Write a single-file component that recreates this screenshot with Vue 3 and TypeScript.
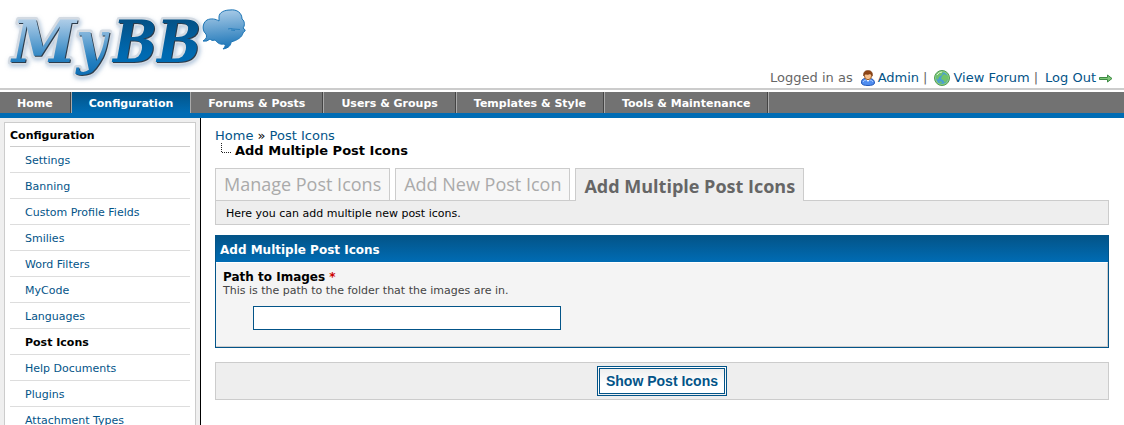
<script setup lang="ts">
import { ref } from 'vue'

interface Tab {
  label: string
  active?: boolean
}

const navItems: Tab[] = [
  { label: 'Home' },
  { label: 'Configuration', active: true },
  { label: 'Forums & Posts' },
  { label: 'Users & Groups' },
  { label: 'Templates & Style' },
  { label: 'Tools & Maintenance' },
]

const menuItems: Tab[] = [
  { label: 'Settings' },
  { label: 'Banning' },
  { label: 'Custom Profile Fields' },
  { label: 'Smilies' },
  { label: 'Word Filters' },
  { label: 'MyCode' },
  { label: 'Languages' },
  { label: 'Post Icons', active: true },
  { label: 'Help Documents' },
  { label: 'Plugins' },
  { label: 'Attachment Types' },
]

const tabs: Tab[] = [
  { label: 'Manage Post Icons' },
  { label: 'Add New Post Icon' },
  { label: 'Add Multiple Post Icons', active: true },
]

const path = ref('')
</script>

<template>
  <div class="page">
    <header class="header">
      <a href="#" class="logo" aria-label="MyBB">
        <svg width="250" height="84" viewBox="0 0 250 84">
          <defs>
            <linearGradient id="light" gradientUnits="userSpaceOnUse" x1="0" y1="18" x2="0" y2="74">
              <stop offset="0" stop-color="#b4d0e9" />
              <stop offset="0.75" stop-color="#2680c0" />
              <stop offset="1" stop-color="#0f70b6" />
            </linearGradient>
            <linearGradient id="dark" gradientUnits="userSpaceOnUse" x1="0" y1="18" x2="0" y2="62">
              <stop offset="0" stop-color="#045084" />
              <stop offset="0.8" stop-color="#0069b0" />
              <stop offset="1" stop-color="#006cb4" />
            </linearGradient>
            <linearGradient id="bubble" x1="0.5" y1="0" x2="0.6" y2="1">
              <stop offset="0" stop-color="#a9cbe7" />
              <stop offset="1" stop-color="#1672b6" />
            </linearGradient>
            <filter id="shade" x="-10%" y="-10%" width="120%" height="130%">
              <feDropShadow dx="1" dy="2" stdDeviation="2" flood-color="#7d9fc4" flood-opacity="0.6" />
            </filter>
          </defs>
          <g class="halo" filter="url(#shade)">
            <text x="12" y="62">M<tspan class="narrow">y</tspan></text>
            <text x="113" y="62" class="narrow">BB</text>
          </g>
          <g class="edge">
            <text x="13" y="63">M<tspan class="narrow">y</tspan></text>
            <text x="114" y="63" class="narrow">BB</text>
          </g>
          <g class="face">
            <text x="12" y="62" fill="url(#light)">M<tspan class="narrow">y</tspan></text>
            <text x="113" y="62" class="narrow" fill="url(#dark)">BB</text>
          </g>
          <path
            d="M219 17C219 12 225 10 230 10C237 9 242 13 242 19C245 21 245 26 243 28Q246 30 245 31Q243 32 243 33C242 37 238 40 231 42C231 45 229 48 223 49Q227 45 224 44C219 45 217 42 215 40C212 41 211 40 210 39Q207 42 203 41Q208 38 206 34C202 31 202 23 207 20C211 18 216 19 219 21Z"
            fill="url(#bubble)" stroke="#1b74b5" stroke-width="1"
          />
          <path d="M228 29Q231 28 233 29L240 29.500M231 30L235 30.500" fill="none" stroke="#2a7fbd" />
        </svg>
      </a>
      <div class="welcome">
        <span class="muted">Logged in as</span>
        <a href="#" class="user">
          <svg width="16" height="16" viewBox="0 0 16 16">
            <path d="M1.500 13Q1 9 5 8.500H10Q14.500 9 14.500 13Q14 15.500 8 15.500T1.500 13Z" fill="#4f8df0" stroke="#2559b8" />
            <path d="M3 12Q4 10 6 10M10 10Q12 10 13 12" fill="none" stroke="#a9cbff" />
            <path d="M5.500 8.500L8 12L10.500 8.500Z" fill="#fff" />
            <ellipse cx="8" cy="5.700" rx="3.600" ry="4" fill="#f7bf8d" stroke="#9a5a24" />
            <path d="M3.500 6Q3 .5 8 .5T12.500 6Q11 5 10.500 3.500Q8 5 5 4Q4.500 5 3.500 6Z" fill="#8f4516" stroke="#6e300a" stroke-width=".5" />
          </svg>Admin</a>
        <span class="muted bar">|</span>
        <a href="#" class="forum">
          <svg width="16" height="16" viewBox="0 0 16 16">
            <circle cx="8" cy="8" r="7.500" fill="#8ed17a" stroke="#4f9a5b" />
            <circle cx="8" cy="8" r="6" fill="#4b9fd0" />
            <path d="M3 4Q6 1 9 2L8 5L5 7L4 10L2 8ZM10 4L14 6V9L11 13L9 10L7 9L8 6ZM5 11L8 12L7 14Z" fill="#70c36b" />
            <path d="M3 5Q5 2 8 2" fill="none" stroke="#d9f4d4" />
          </svg>View Forum</a>
        <span class="muted bar">|</span>
        <a href="#" class="logout">Log Out<svg width="16" height="16" viewBox="0 0 16 16">
            <path d="M1.500 7.500V9.500H9.500V12L14 8.500L9.500 5V7.500Z" fill="#7cc576" stroke="#3d8a43" />
          </svg></a>
      </div>
    </header>

    <nav class="nav">
      <a v-for="item in navItems" :key="item.label" href="#" :class="{ active: item.active }">{{ item.label }}</a>
    </nav>

    <div class="body">
      <aside class="sidebar">
        <div class="menu">
          <h2>Configuration</h2>
          <ul>
            <li v-for="item in menuItems" :key="item.label">
              <a href="#" :class="{ active: item.active }">{{ item.label }}</a>
            </li>
          </ul>
        </div>
      </aside>

      <main class="content">
        <div class="breadcrumb">
          <div><a href="#">Home</a> » <a href="#">Post Icons</a></div>
          <div class="current">
            <svg width="10" height="10" viewBox="0 0 10 10">
              <path d="M.5 0V9.500H10" fill="none" stroke="#222" stroke-dasharray="1 1" />
            </svg>
            <strong>Add Multiple Post Icons</strong>
          </div>
        </div>

        <div class="tabs">
          <a v-for="tab in tabs" :key="tab.label" href="#" :class="{ active: tab.active }">{{ tab.label }}</a>
        </div>
        <p class="description">Here you can add multiple new post icons.</p>

        <form @submit.prevent>
          <section class="panel">
            <h1>Add Multiple Post Icons</h1>
            <div class="field">
              <label for="path">Path to Images <em>*</em></label>
              <p>This is the path to the folder that the images are in.</p>
              <input id="path" v-model="path" type="text">
            </div>
          </section>
          <div class="actions">
            <button type="submit">Show Post Icons</button>
          </div>
        </form>
      </main>
    </div>
  </div>
</template>

<style>
body {
  background: #fff;
  overflow: hidden;
}
</style>

<style scoped>
.page {
  height: 100vh;
  display: flex;
  flex-direction: column;
  overflow: hidden;
  font-family: Verdana, "DejaVu Sans", sans-serif;
  font-size: 11px;
  color: #000;
}
a {
  color: #035488;
  text-decoration: none;
}
svg {
  display: block;
  flex: none;
}
.header {
  display: flex;
  justify-content: space-between;
  align-items: flex-end;
  height: 88px;
  flex: none;
  border-bottom: 2px solid #ccc;
  margin-bottom: 2px;
}
.logo {
  align-self: flex-start;
}
.logo text {
  font: italic bold 58px "DejaVu Serif", serif;
}
.logo .narrow {
  font-family: "DejaVu Serif Condensed", "DejaVu Serif", serif;
}
.halo {
  fill: #d3dae2;
  stroke: #d3dae2;
  stroke-width: 5px;
  stroke-linejoin: round;
}
.edge {
  fill: #2c3c4c;
}
.welcome {
  display: flex;
  align-items: center;
  font-size: 13px;
  line-height: 16px;
  padding: 0 10px 2px 0;
}
.welcome a {
  display: flex;
  align-items: center;
}
.muted {
  color: #666;
}
.user {
  gap: 2px;
  margin-left: 7px;
}
.forum {
  gap: 3px;
  margin-left: 7px;
}
.logout {
  gap: 2px;
  margin-left: 7px;
}
.bar {
  margin-left: 4px;
}
.nav {
  display: flex;
  flex: none;
  background: #727272;
  border-bottom: 5px solid #006cb4;
}
.nav a {
  color: #fff;
  font-weight: bold;
  line-height: 19px;
  padding: 2px 17px 0;
  border-right: 1px solid #444;
  box-shadow: 1px 0 #aaa;
  margin-right: 1px;
}
.nav .active {
  background: linear-gradient(#035488, #006cb4);
  border-right-width: 0;
}
.body {
  display: flex;
  flex: 1;
  min-height: 0;
}
.sidebar {
  box-sizing: border-box;
  flex: none;
  width: 201px;
  padding: 4px;
  background: #efefef;
  border-right: 1px solid #000;
}
.menu {
  background: #fff;
  border: 1px solid #ccc;
  padding: 0 5px;
}
h2 {
  margin: 0;
  padding-top: 2px;
  font-size: 11px;
  line-height: 21px;
  border-bottom: 1px solid #ccc;
}
ul {
  list-style: none;
  margin: 0;
  padding: 0;
}
li {
  padding: 2px 0 0 15px;
  line-height: 23px;
  border-bottom: 1px solid #ddd;
}
.menu .active {
  color: #000;
  font-weight: bold;
}
.content {
  flex: 1;
  min-width: 0;
  padding: 10px 15px 0 14px;
}
.breadcrumb {
  font-size: 13px;
  line-height: 15px;
}
.current {
  display: flex;
  gap: 4px;
  padding-left: 6px;
}
.tabs {
  display: flex;
  align-items: flex-start;
  gap: 5px;
  margin-top: 10px;
  font: 18px "Open Sans", sans-serif;
}
.tabs a {
  box-sizing: border-box;
  height: 32px;
  line-height: 30px;
  padding: 0 8px;
  color: #aaa;
  background: #f7f7f7;
  border: 1px solid #ccc;
  border-bottom: 0;
}
.tabs .active {
  height: 33px;
  line-height: 35px;
  margin-bottom: -1px;
  position: relative;
  color: #666;
  font-weight: bold;
  background: #eee;
}
.description {
  margin: 0 0 10px;
  padding: 2px 10px 0;
  line-height: 21px;
  background: #eee;
  border: 1px solid #ccc;
}
.panel {
  border: 1px solid #035488;
  background: #f4f4f4;
}
h1 {
  margin: 0;
  padding: 2px 4px 0;
  font-size: 12px;
  line-height: 24px;
  color: #fff;
  background: linear-gradient(#035488, #006cb4);
}
.field {
  padding: 8px 7px 16px;
  border: 1px solid #ccc;
  border-top-color: #fff;
  border-left: 0;
}
.field label {
  display: block;
  font-size: 12px;
  font-weight: bold;
  line-height: 13px;
}
.field em {
  color: #c00;
  font-style: normal;
}
.field p {
  margin: 0;
  line-height: 14px;
  color: #444;
}
.field input {
  display: block;
  box-sizing: border-box;
  width: 308px;
  max-width: 90%;
  height: 24px;
  margin: 8px 0 0 30px;
  padding: 3px;
  border: 1px solid #035488;
  background: #fff;
  font: 13px Verdana, "DejaVu Sans", sans-serif;
}
.actions {
  display: flex;
  justify-content: center;
  margin-top: 14px;
  padding: 3px;
  background: #eee;
  border: 1px solid #ccc;
}
button {
  padding: 4px 6px;
  border: 3px double #035488;
  background: linear-gradient(#eee, #fff 60%);
  color: #035488;
  font: bold 14px/16px "Liberation Sans", Arial, sans-serif;
}
</style>
